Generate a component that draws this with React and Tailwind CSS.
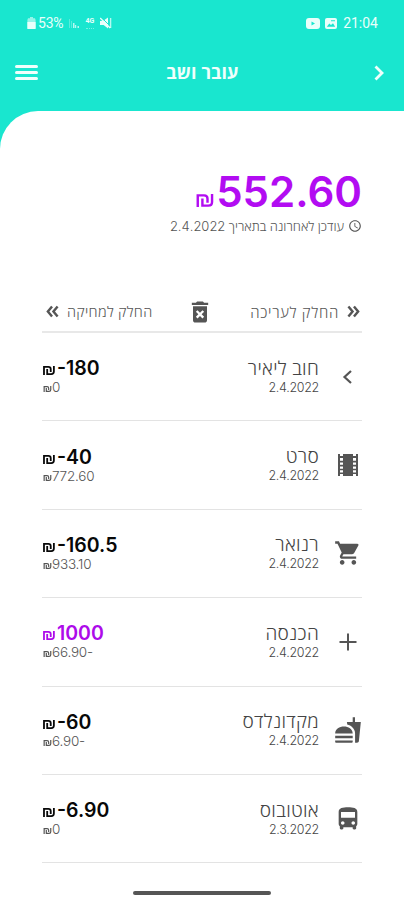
import clsx from 'clsx';
import {
  MdAccessTime, MdDeleteForever, MdDirectionsBus, MdFastfood, MdShoppingCart,
} from 'react-icons/md';

const transactions = [
  { icon: ChevronLeft, title: 'חוב ליאיר', date: '2.4.2022', amount: '-180', balance: '0' },
  { icon: Film, title: 'סרט', date: '2.4.2022', amount: '-40', balance: '772.60' },
  { icon: MdShoppingCart, title: 'רנואר', date: '2.4.2022', amount: '-160.5', balance: '933.10' },
  { icon: Plus, title: 'הכנסה', date: '2.4.2022', amount: '1000', balance: '66.90-', income: true },
  { icon: MdFastfood, title: 'מקדונלדס', date: '2.4.2022', amount: '-60', balance: '6.90-' },
  { icon: MdDirectionsBus, title: 'אוטובוס', date: '2.3.2022', amount: '-6.90', balance: '0' },
];

function ChevronLeft({ className }) {
  return (
    <svg viewBox="0 0 28 28" fill="none" stroke="currentColor" strokeWidth="2.2" className={className}>
      <path d="M17 8L10.5 14L17 20" />
    </svg>
  );
}

function Plus({ className }) {
  return (
    <svg viewBox="0 0 28 28" fill="none" stroke="currentColor" strokeWidth="2" className={className}>
      <path d="M14 5.5V22.5M5.5 14H22.5" />
    </svg>
  );
}

function Film({ className }) {
  return (
    <svg viewBox="0 0 28 28" className={className}>
      <path
        fill="currentColor"
        fillRule="evenodd"
        d="M4 3h2v2h3V3h10v2h3V3h2v22h-2v-2h-3v2H9v-2H6v2H4zM6 7v2.8h3V7zm0 4.4v2.4h3v-2.4zm0 4v2.4h3v-2.4zm0 3.8v2.2h3v-2.2zM19 7v2.8h3V7zm0 4.4v2.4h3v-2.4zm0 4v2.4h3v-2.4zm0 3.8v2.2h3v-2.2z"
      />
    </svg>
  );
}

function Shekel({ className, strokeWidth = 2 }) {
  return (
    <svg viewBox="0 0 18 14" fill="none" stroke="currentColor" strokeWidth={strokeWidth} className={className}>
      <path d="M1.2 14V1.5H8Q11.7 1.5 11.7 5.2V9.5M6.2 4.8V12.5H12.5Q16.6 12.5 16.6 8.5V0" />
    </svg>
  );
}

function DoubleChevron({ className }) {
  return (
    <svg viewBox="0 0 14 14" fill="none" stroke="currentColor" strokeWidth="2.6" className={className}>
      <path d="M1.5 1.5L6 7L1.5 12.5M7.5 1.5L12 7L7.5 12.5" />
    </svg>
  );
}

function StatusBar() {
  return (
    <div dir="ltr" className="flex h-[46px] items-center justify-between pl-[27px] pr-[26px] text-[#e9fffb]">
      <div className="flex items-center">
        <svg viewBox="0 0 9 12" className="h-3 w-[9px]" fill="currentColor">
          <path d="M3 0h3v1.2h2L8.6 3v8L8 12H1L.4 11V3L1 1.2h2z" opacity=".6" />
          <path d="M.4 5h8.2v7H.4z" />
        </svg>
        <span className="ml-0.5 text-[14px] tracking-[-0.2px] [font-family:Roboto,sans-serif]">53%</span>
        <svg viewBox="0 0 12 11" className="ml-[5px] h-[11px] w-3" fill="currentColor">
          <path d="M1 1h1v9H1zM3 3h1v7H3z" opacity=".3" />
          <path d="M5 5h1.5v5H5zM7 7h1.2v3H7zM9.5 8H11v2H9.5z" opacity=".75" />
        </svg>
        <div className="ml-[5px] flex w-[9px] flex-col items-center">
          <span className="text-[7px] font-bold leading-[7px] [font-family:Roboto,sans-serif]">4G</span>
          <span className="mt-px h-[3px] w-2 border-b border-dotted border-white/40" />
        </div>
        <svg viewBox="0 0 12 12" className="ml-[6px] size-3" fill="currentColor">
          <path d="M0 4h3l5-3.6v11.2L3.6 8H0z" />
          <path d="M1.4.4L9 8" stroke="#19e6cf" strokeWidth="1" />
          <path d="M.2 1L10.2 11" stroke="currentColor" strokeWidth="1.3" />
          <path d="M9.9 1h1.4v10H9.9z" opacity=".75" />
        </svg>
      </div>
      <div className="flex items-center">
        <svg viewBox="0 0 14 11" className="h-[11px] w-3.5">
          <rect width="14" height="11" rx="3" fill="currentColor" />
          <path d="M5.5 3.4L9 5.5L5.5 7.6z" fill="#19e6cf" />
        </svg>
        <svg viewBox="0 0 12 11" className="ml-[5px] h-[11px] w-3">
          <rect width="12" height="11" rx="2" fill="currentColor" />
          <path d="M1.8 8.8L4.3 5.5L6 7L8 5.2L10.2 8.8zM6 2.2h4v1H6z" fill="#19e6cf" />
        </svg>
        <span className="ml-1.5 text-[14px] [font-family:Roboto,sans-serif]">21:04</span>
      </div>
    </div>
  );
}

function Header() {
  return (
    <header dir="ltr" className="flex h-[53px] items-center justify-between pl-[15px] pr-3 text-[#effffc]">
      <div className="flex w-[23px] flex-col gap-[3px]">
        <span className="h-[3px] rounded-sm bg-current" />
        <span className="h-[3px] rounded-sm bg-current" />
        <span className="h-[3px] rounded-sm bg-current" />
      </div>
      <h1 className="pb-0.5 pl-px text-[18px] font-bold leading-6 tracking-[0.1px]">עובר ושב</h1>
      <svg viewBox="0 0 26 26" fill="none" stroke="currentColor" strokeWidth="2.8" className="size-[26px]">
        <path d="M9.5 6.5L16 13L9.5 19.5" />
      </svg>
    </header>
  );
}

function TransactionRow({ item }) {
  const Icon = item.icon;
  return (
    <li className="flex h-[88.4px] items-center border-b-[1.5px] border-[#e3e3e3]">
      <div className="flex w-7 shrink-0 justify-center text-[#555]">
        <Icon className="size-7" />
      </div>
      <div className="ml-auto mr-[15px] pb-px text-[#444]">
        <div className="text-[19px] font-light leading-[23px] tracking-[0.3px]">{item.title}</div>
        <div className="text-[12.5px] font-light leading-4 tracking-[-0.3px] [font-family:Inter,sans-serif]">{item.date}</div>
      </div>
      <div dir="ltr" className="pb-px pl-px [font-family:Inter,sans-serif]">
        <div className={clsx('flex items-baseline text-[19.5px] font-semibold leading-[22px]', item.income ? 'text-[#ad0bea]' : 'text-[#080808]')}>
          <Shekel className="mr-0.5 h-[9px] w-3" strokeWidth={2.8} />
          {item.amount}
        </div>
        <div className="flex items-baseline text-[13.5px] font-light leading-4 tracking-[-0.2px] text-[#555]">
          <Shekel className="h-1.5 w-[9px]" strokeWidth={2.8} />
          {item.balance}
        </div>
      </div>
    </li>
  );
}

export default function App() {
  return (
    <div dir="rtl" className="h-[900px] w-[404px] overflow-hidden bg-[#19e6cf] [font-family:'Open_Sans','Noto_Sans',sans-serif]">
      <StatusBar />
      <Header />
      <main className="mt-3 flex h-[789px] flex-col rounded-tl-[38px] bg-white px-[42px]">
        <section className="pt-[58px]">
          <div dir="ltr" className="flex items-baseline justify-end text-[#b20cf2] [font-family:Inter,sans-serif]">
            <Shekel className="mr-0.5 h-[13px] w-[18px]" strokeWidth={2.6} />
            <span className="text-[42px] font-semibold leading-[46px]">552.60</span>
          </div>
          <div className="flex items-center gap-1 text-[13px] leading-[22px] text-[#555]">
            <MdAccessTime className="size-3.5" />
            <span className="font-light">עודכן לאחרונה בתאריך <span className="[font-family:Inter,sans-serif]">2.4.2022</span></span>
          </div>
        </section>

        <div className="mt-[62px] flex h-[34px] shrink-0 items-center justify-between border-b-2 border-[#e8e8e8] pb-[7px] text-[#555]">
          <div className="flex w-[130px] items-center gap-2">
            <DoubleChevron className="mr-0.5 size-[13px]" />
            <span className="whitespace-nowrap text-[15px] font-light leading-5 tracking-[0.7px]">החלק לעריכה</span>
          </div>
          <MdDeleteForever className="mr-1 size-7" />
          <div className="flex w-[130px] items-center justify-end gap-2">
            <span className="whitespace-nowrap text-[14.5px] font-light leading-5 tracking-[0.3px]">החלק למחיקה</span>
            <DoubleChevron className="ml-1 size-[13px] rotate-180" />
          </div>
        </div>

        <ul>
          {transactions.map((item) => (
            <TransactionRow key={item.title} item={item} />
          ))}
        </ul>

        <div className="mx-auto mt-[28px] h-1 w-[138px] shrink-0 rounded-full bg-[#555]" />
      </main>
    </div>
  );
}
